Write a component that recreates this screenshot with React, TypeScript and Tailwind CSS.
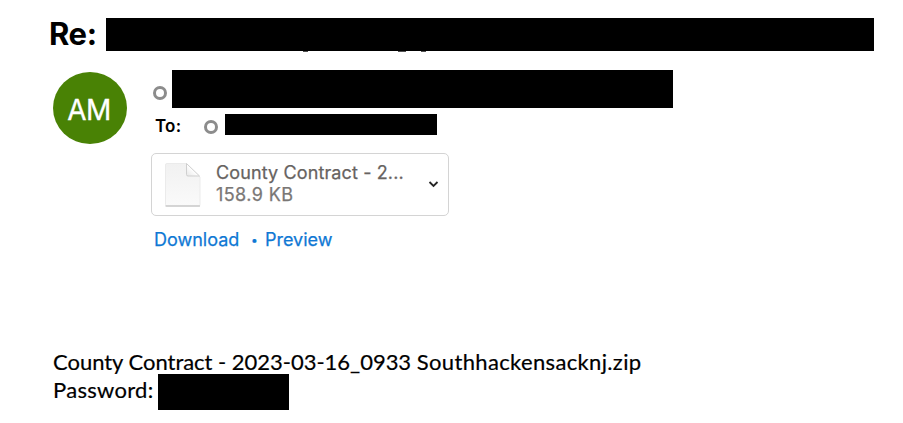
import clsx from 'clsx';

interface RedactedProps {
  className?: string;
}

/** Solid bar that hides private content. */
function Redacted({ className }: RedactedProps) {
  return <div className={clsx('shrink-0 bg-black', className)} />;
}

/** Presence ring shown before a contact's name. */
function Presence({ className }: { className?: string }) {
  return (
    <span
      className={clsx('size-[13.5px] shrink-0 rounded-full border-[3px] border-[#8c8c8c]', className)}
    />
  );
}

function DocumentIcon() {
  return (
    <svg className="h-[46px] w-[38px] shrink-0" viewBox="0 0 38 46" fill="none">
      <defs>
        <linearGradient id="page" x1="0" y1="0" x2="0" y2="1">
          <stop offset="0" stopColor="#f1f1f1" />
          <stop offset="1" stopColor="#fafafa" />
        </linearGradient>
        <linearGradient id="fold" x1="0" y1="1" x2="1" y2="0">
          <stop offset="0" stopColor="#e6e6e6" />
          <stop offset="0.5" stopColor="#ffffff" />
        </linearGradient>
      </defs>
      <path
        d="M3 1.5h19.5L36 15v27.5a1.5 1.5 0 0 1-1.5 1.5H3a1.5 1.5 0 0 1-1.5-1.5V3A1.5 1.5 0 0 1 3 1.5Z"
        fill="url(#page)"
        stroke="#ebebeb"
      />
      <path d="M2 44h33.5" stroke="#cacaca" strokeWidth="1.3" strokeLinecap="round" />
      <path d="M22.5 1.5v11A1.5 1.5 0 0 0 24 14h11.5Z" fill="url(#fold)" />
      <path d="M35.5 14 22.5 1.5v11A1.5 1.5 0 0 0 24 14h11.5" stroke="#cfcfcf" />
    </svg>
  );
}

function Attachment() {
  return (
    <div className="mt-[18px] flex h-[63px] w-[298px] items-start rounded-[5px] border-[1.5px] border-[#d4d4d4]">
      <div className="ml-[12px] mt-[8px]">
        <DocumentIcon />
      </div>
      <div className="ml-[14px] mt-2 w-[208px] whitespace-nowrap text-[18px] leading-[22.5px] text-[#676361] [-webkit-text-stroke:0.25px_currentColor]">
        <div className="tracking-[0.12px]">County Contract - 2...</div>
        <div className="-mt-[0.5px] tracking-[0.4px] text-[#7a7775]">158.9 KB</div>
      </div>
      <svg className="ml-[4px] mt-[26px] h-[8px] w-[11px] shrink-0" viewBox="0 0 11 8" fill="none">
        <path d="m1.5 2 4 4 4-4" stroke="#262626" strokeWidth="1.8" />
      </svg>
    </div>
  );
}

export default function App() {
  return (
    <main className="h-[423px] w-[903px] overflow-hidden bg-white font-['Inter',sans-serif] text-black">
      <header className="flex pl-[49px] pt-[18px]">
        <h1 className="-mt-px w-[57px] shrink-0 whitespace-nowrap text-[31px] font-bold leading-[33px] tracking-[-0.4px]">
          Re:
        </h1>
        <div className="relative">
          <Redacted className="h-[33px] w-[768px]" />
          {/* descenders peeking out below the bar */}
          <span className="absolute left-[197px] top-[33px] h-px w-[5px] bg-neutral-600" />
          <span className="absolute left-[292px] top-[33px] h-px w-[8px] bg-neutral-600" />
          <span className="absolute left-[315px] top-[33px] h-px w-[5px] bg-neutral-600" />
        </div>
      </header>

      <section className="flex pl-[53px] pt-[19px]">
        <div className="mt-[2px] flex h-[72px] w-[74px] shrink-0 items-center justify-center rounded-[50%] bg-[#498205] pr-[2px] pt-[3px] text-[28px] leading-none tracking-[-0.5px] text-white [-webkit-text-stroke:0.3px_white]">
          <span>AM</span>
        </div>

        <div className="ml-[24px]">
          <div className="flex">
            <Presence className="ml-[2px] mt-[16px]" />
            <Redacted className="ml-[5.5px] h-[38px] w-[501px]" />
          </div>
          <div className="mt-[6px] flex h-[21px] items-center">
            <span className="ml-[4px] w-[49px] pt-[4px] text-[17px] font-semibold leading-none tracking-[0.2px]">
              To:
            </span>
            <Presence className="mt-[5px]" />
            <Redacted className="ml-[7.5px] h-[21px] w-[212px]" />
          </div>

          <Attachment />

          <div className="ml-[3px] mt-[12px] flex whitespace-nowrap text-[18px] leading-[24px] text-[#0f78d4] [-webkit-text-stroke:0.25px_currentColor]">
            <span className="w-[97px]">Download</span>
            <span className="w-[14px] text-[12px]">•</span>
            <span>Preview</span>
          </div>
        </div>
      </section>

      <article className="ml-[53px] mt-[96px] whitespace-nowrap font-['Lato',sans-serif] text-[22px] leading-[28px] [-webkit-text-stroke:0.2px_black]">
        <p>
          <span className="tracking-[-0.02px]">County Contract - 2023-03-16_0933 </span>
          <span className="tracking-[0.35px]">Southhackensacknj.zip</span>
        </p>
        <div className="flex">
          <span className="w-[105px] shrink-0 tracking-[0.3px]">Password:</span>
          <Redacted className="-mt-[2.5px] h-[36px] w-[131px]" />
        </div>
      </article>
    </main>
  );
}
